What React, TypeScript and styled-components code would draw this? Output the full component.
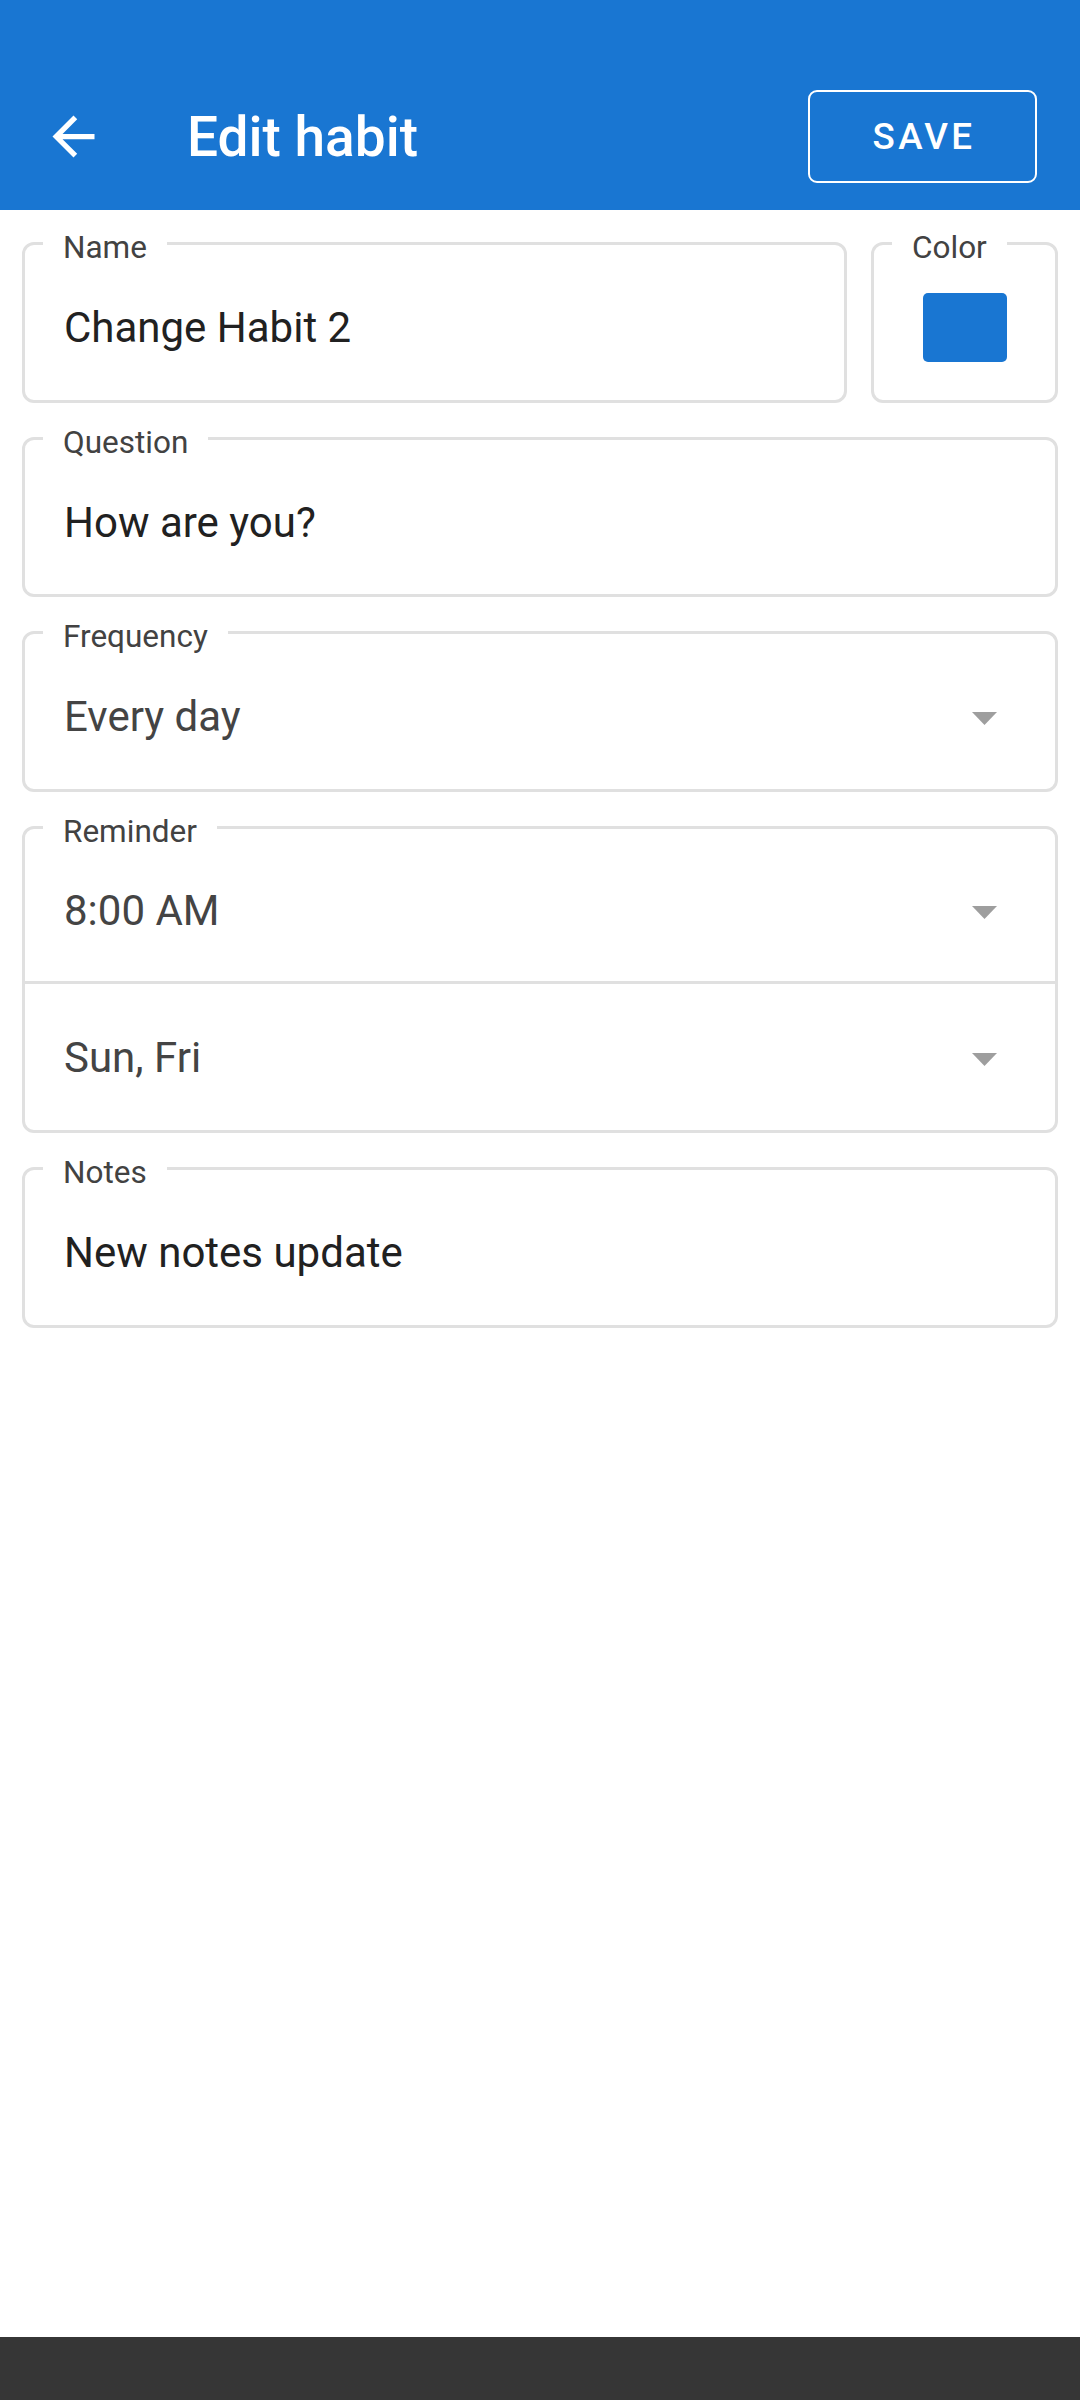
import React from "react";
import styled, { createGlobalStyle } from "styled-components";

const Global = createGlobalStyle`
  html, body { margin: 0; padding: 0; background: #ffffff; }
  body { font-family: Roboto, "Noto Sans", "Liberation Sans", sans-serif; }
  * { box-sizing: border-box; }
`;

const Page = styled.div`
  height: 100vh;
  display: flex;
  flex-direction: column;
  background: #ffffff;
`;

const AppBar = styled.header`
  background: #1976d2;
  height: 210px;
  padding-top: 63px;
  flex-shrink: 0;
`;

const Toolbar = styled.div`
  height: 147px;
  display: flex;
  align-items: center;
  padding: 0 43px 0 42px;
`;

const BackButton = styled.button`
  width: 63px;
  height: 63px;
  padding: 0;
  border: none;
  background: transparent;
  display: flex;
  align-items: center;
  justify-content: center;
  cursor: pointer;
`;

const Title = styled.h1`
  margin: 0 0 0 82px;
  font-size: 55px;
  font-weight: 500;
  color: #ffffff;
  line-height: 1.2;
`;

const SaveButton = styled.button`
  margin-left: auto;
  width: 229px;
  height: 93px;
  border: 2px solid #ffffff;
  border-radius: 9px;
  background: transparent;
  color: #ffffff;
  font-family: Roboto, "Noto Sans", sans-serif;
  font-size: 36.75px;
  font-weight: 500;
  letter-spacing: 3.3px;
  padding: 0 0 0 3px;
  cursor: pointer;
`;

const Content = styled.main`
  flex: 1;
  display: flex;
  flex-direction: column;
  justify-content: flex-start;
  gap: 16px;
  padding: 14px 22px 0;
`;

const FieldRow = styled.div`
  display: flex;
  gap: 24px;
`;

const Field = styled.fieldset<{ $width?: number; $pb?: number; $grow?: boolean }>`
  margin: 0;
  padding: 0 0 ${(p) => (p.$pb ?? 6)}px;
  border: 3px solid #e0e0e0;
  border-radius: 12px;
  min-width: 0;
  flex: ${(p) => (p.$grow ? "1 1 0" : "0 0 auto")};
  ${(p) => (p.$width ? `width: ${p.$width}px;` : "")}
`;

const Legend = styled.legend`
  margin-left: 18px;
  padding: 8px 20px 0;
  font-size: 31.5px;
  line-height: 1;
  color: #424242;
`;

const Row = styled.div<{ $h?: number; $pt?: number; $pb?: number }>`
  height: ${(p) => p.$h ?? 130}px;
  display: flex;
  align-items: center;
  padding: ${(p) => p.$pt ?? 0}px 58px ${(p) => p.$pb ?? 0}px 39px;
`;

const Value = styled.span<{ $muted?: boolean }>`
  flex: 1;
  font-size: 42px;
  line-height: 1.2;
  color: ${(p) => (p.$muted ? "#444444" : "#212121")};
  white-space: nowrap;
`;

const Divider = styled.div`
  height: 3px;
  background: #e0e0e0;
`;

const SwatchRow = styled.div`
  height: 130px;
  display: flex;
  align-items: center;
  justify-content: center;
  padding-bottom: 3px;
`;

const Swatch = styled.div<{ $color: string }>`
  width: 84px;
  height: 69px;
  border-radius: 5px;
  background: ${(p) => p.$color};
`;

const Arrow = styled.svg`
  width: 25px;
  height: 13px;
  margin-top: 2px;
  flex-shrink: 0;
`;

const NavBar = styled.div`
  height: 63px;
  background: #363636;
  flex-shrink: 0;
`;

const DropArrow = () => (
  <Arrow viewBox="0 0 25 13">
    <polygon points="0,0 25,0 12.5,13" fill="#9e9e9e" />
  </Arrow>
);

export default function App() {
  return (
    <>
      <Global />
      <Page>
        <AppBar>
          <Toolbar>
            <BackButton aria-label="Back">
              <svg width="63" height="63" viewBox="0 0 24 24">
                <path
                  d="M20 11H7.83l5.59-5.59L12 4l-8 8 8 8 1.41-1.41L7.83 13H20v-2z"
                  fill="#ffffff"
                />
              </svg>
            </BackButton>
            <Title>Edit habit</Title>
            <SaveButton>SAVE</SaveButton>
          </Toolbar>
        </AppBar>
        <Content>
          <FieldRow>
            <Field $grow>
              <Legend>Name</Legend>
              <Row>
                <Value>Change Habit 2</Value>
              </Row>
            </Field>
            <Field $width={187}>
              <Legend>Color</Legend>
              <SwatchRow>
                <Swatch $color="#1976d2" />
              </SwatchRow>
            </Field>
          </FieldRow>
          <Field>
            <Legend>Question</Legend>
            <Row>
              <Value>How are you?</Value>
            </Row>
          </Field>
          <Field>
            <Legend>Frequency</Legend>
            <Row>
              <Value $muted>Every day</Value>
              <DropArrow />
            </Row>
          </Field>
          <Field $pb={0}>
            <Legend>Reminder</Legend>
            <Row $h={134} $pb={5}>
              <Value $muted>8:00 AM</Value>
              <DropArrow />
            </Row>
            <Divider />
            <Row $h={146} $pt={2}>
              <Value $muted>Sun, Fri</Value>
              <DropArrow />
            </Row>
          </Field>
          <Field>
            <Legend>Notes</Legend>
            <Row>
              <Value>New notes update</Value>
            </Row>
          </Field>
        </Content>
        <NavBar />
      </Page>
    </>
  );
}
